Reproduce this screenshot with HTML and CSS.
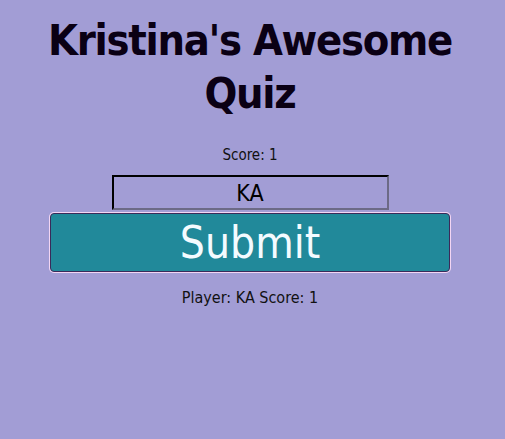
FILE: index.html
```html
<!DOCTYPE html>
<html>
<head>
<meta charset="utf-8">
<link rel="stylesheet" href="styles.css">
</head>
<body>
<main class="quiz">
  <h1 class="title">Kristina's Awesome Quiz</h1>
  <p class="score">Score: 1</p>
  <input class="name" type="text" value="KA">
  <button class="submit">Submit</button>
  <p class="result">Player: KA Score: 1</p>
</main>
</body>
</html>
```

FILE: styles.css
```css
html, body {
  margin: 0;
  padding: 0;
  background: #a29dd5;
}
body {
  font-family: "DejaVu Sans Condensed", "DejaVu Sans", Verdana, sans-serif;
  color: #000;
}
.quiz {
  width: 500px;
  display: flex;
  flex-direction: column;
  align-items: center;
  padding-top: 14px;
}
.title {
  margin: 0;
  width: 460px;
  text-align: center;
  font-size: 43px;
  letter-spacing: -1.3px;
  line-height: 53px;
  font-weight: bold;
  color: #0a0014;
}
.score {
  margin: 25px 0 0;
  font-size: 15px;
  line-height: 20px;
  color: #111;
}
.name {
  margin-top: 10px;
  width: 277px;
  height: 35px;
  box-sizing: border-box;
  border: 2px inset #5a5870;
  border-top-color: #1c1a2c;
  border-left-color: #1c1a2c;
  border-right-color: #6c6a86;
  border-bottom-color: #6c6a86;
  background: transparent;
  text-align: center;
  font-family: inherit;
  font-size: 23px;
  color: #000;
  padding: 0;
}
.submit {
  margin-top: 3px;
  width: 400px;
  height: 59px;
  box-sizing: border-box;
  border: 1px solid #3a2a5a;
  box-shadow: 0 0 0 1px #f3d6f3;
  border-radius: 4px;
  background: #21899a;
  color: #f4fbff;
  font-family: inherit;
  font-size: 44px;
  line-height: 55px;
  padding: 0;
}
.result {
  margin: 16px 0 0;
  font-size: 16px;
  line-height: 20px;
  color: #111;
}
```
